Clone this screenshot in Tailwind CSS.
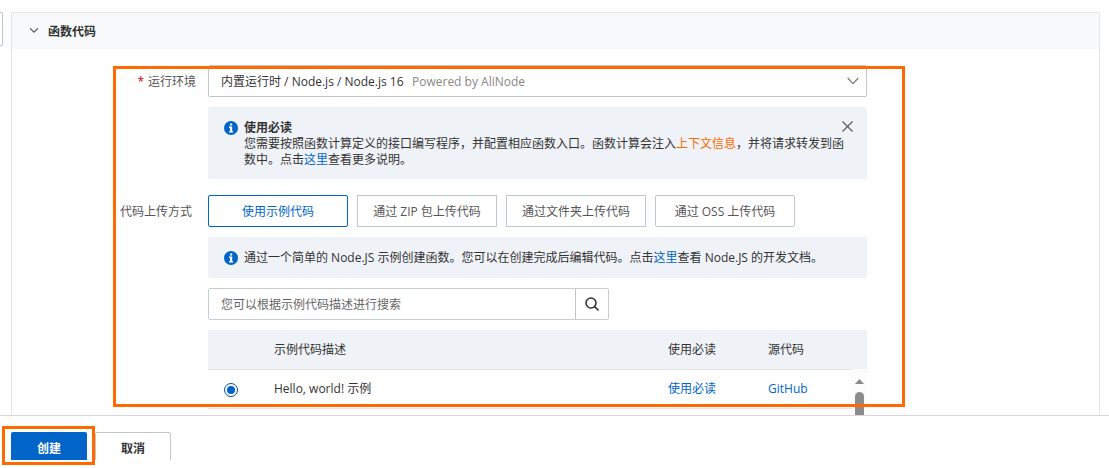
<!DOCTYPE html>
<html lang="zh-CN">
<head>
  <meta charset="UTF-8" />
  <meta name="viewport" content="width=device-width, initial-scale=1.0" />
  <title>创建函数</title>
  <script src="https://cdn.jsdelivr.net/npm/@tailwindcss/browser@4"></script>
</head>
<body class="h-screen flex flex-col overflow-hidden bg-[#fefefe] text-[12px] leading-4 text-[#333] font-['Open_Sans','Noto_Sans_CJK_SC',sans-serif]">
  <!-- Main Section -->
  <div class="flex-1 min-h-0 flex overflow-hidden pt-3">
    <button aria-label="展开菜单" class="w-[3px] h-[34px] shrink-0 bg-white border border-l-0 border-[#c0c6cc] rounded-r-xs shadow-md"></button>

    <section class="flex-1 flex flex-col ml-2 mr-[9px] border border-b-0 border-[#e3e4e6] rounded-t-xs">
      <h2 class="h-9 shrink-0 bg-[#f7f9fa]">
        <button class="flex items-center gap-[10px] h-full pt-0.5 pl-[18px] font-bold">
          <svg class="w-2 h-2 -mt-1" viewBox="0 0 8 8" fill="none" stroke="#555" stroke-width="1.1"><path d="M0 2.2 4 6.2 8 2.2" /></svg>
          函数代码
        </button>
      </h2>

      <form class="relative flex-1 min-h-0 mt-4 ml-[101px] mr-[194px] pr-[38px]">
        <div class="flex gap-3">
          <label for="runtime" class="w-[83px] shrink-0 leading-[34px] text-right text-[#555]"><span class="text-[#c80000] mr-1">*</span>运行环境</label>
          <div class="flex-1 min-w-0">
            <div class="relative">
              <select id="runtime" class="block w-full h-8 pt-0.5 pl-3 pr-8 appearance-none bg-white border border-[#c0c6cc] rounded-xs">
                <option>内置运行时 / Node.js / Node.js 16</option>
              </select>
              <span class="absolute left-[204px] top-0 leading-[34px] text-[#888] pointer-events-none">Powered by AliNode</span>
              <svg class="absolute right-2 top-2.5 w-3 h-3 pointer-events-none" viewBox="0 0 12 12" fill="none" stroke="#777" stroke-width="1.1"><path d="M0.7 3 6 8.6 11.3 3" /></svg>
            </div>

            <div class="relative flex gap-1.5 mt-2.5 pt-[13px] pb-[11px] px-4 bg-[#eff2f7] rounded-xs">
              <svg class="w-3.5 h-3.5 mt-px shrink-0" viewBox="0 0 14 14"><circle cx="7" cy="7" r="7" fill="#0064c8" /><path d="M6 2.4h2.2v2H6zM5 5.6h3.2v4.6h1v1.4H5v-1.4h1V7H5z" fill="#fff" /></svg>
              <div>
                <h3 class="font-bold">使用必读</h3>
                <p>您需要按照函数计算定义的接口编写程序，并配置相应函数入口。函数计算会注入<a href="#" class="text-[#ff6a00]">上下文信息</a>，并将请求转发到函数中。点击<a href="#" class="text-[#0064c8]">这里</a>查看更多说明。</p>
              </div>
              <button type="button" aria-label="关闭" class="absolute right-3.5 top-3.5">
                <svg class="w-[11px] h-[11px]" viewBox="0 0 11 11" fill="none" stroke="#555" stroke-width="1.1"><path d="M0.5 0.5 10.5 10.5M10.5 0.5 0.5 10.5" /></svg>
              </button>
            </div>
          </div>
        </div>

        <div class="flex gap-3 mt-4">
          <span id="uploadLabel" class="w-[83px] shrink-0 pr-1 leading-[34px] text-right text-[#555]">代码上传方式</span>
          <div class="flex-1 min-w-0">
            <div role="group" aria-labelledby="uploadLabel" class="flex gap-[9px] text-[#555]">
              <button type="button" class="w-[140px] h-8 pt-0.5 bg-white border border-[#0064c8] text-[#0064c8] rounded-xs">使用示例代码</button>
              <button type="button" class="w-[140px] h-8 pt-0.5 bg-white border border-[#c0c6cc]">通过 ZIP 包上传代码</button>
              <button type="button" class="w-[140px] h-8 pt-0.5 bg-white border border-[#c0c6cc]">通过文件夹上传代码</button>
              <button type="button" class="w-[140px] h-8 pt-0.5 bg-white border border-[#c0c6cc] rounded-xs">通过 OSS 上传代码</button>
            </div>

            <div class="flex items-center gap-1.5 h-[41px] mt-2.5 px-4 bg-[#eff2f7] rounded-xs">
              <svg class="w-3.5 h-3.5 shrink-0" viewBox="0 0 14 14"><circle cx="7" cy="7" r="7" fill="#0064c8" /><path d="M6 2.4h2.2v2H6zM5 5.6h3.2v4.6h1v1.4H5v-1.4h1V7H5z" fill="#fff" /></svg>
              <p>通过一个简单的 Node.JS 示例创建函数。您可以在创建完成后编辑代码。点击<a href="#" class="text-[#0064c8]">这里</a>查看 Node.JS 的开发文档。</p>
            </div>

            <div class="flex w-[401px] h-8 mt-2.5 bg-white border border-[#c9cdd2] rounded-xs">
              <input type="text" aria-label="搜索示例代码" placeholder="您可以根据示例代码描述进行搜索" class="flex-1 pt-0.5 px-3 placeholder:text-[#666]" />
              <button type="button" aria-label="搜索" class="w-[33px] flex items-center justify-center border-l border-[#c0c6cc]">
                <svg class="w-3.5 h-3.5" viewBox="0 0 14 14" fill="none" stroke="#333" stroke-width="1.6"><circle cx="6" cy="6" r="5" /><path d="M9.6 9.6 13.5 13.3" /></svg>
              </button>
            </div>

            <div class="relative mt-2.5">
              <table class="w-full table-fixed text-left">
                <thead class="bg-[#eff2f7]">
                  <tr class="h-[39px] border-b border-[#e3e4e6]">
                    <th class="w-[66px]"></th>
                    <th class="pt-0.5 font-normal">示例代码描述</th>
                    <th class="w-[100px] pt-0.5 font-normal">使用必读</th>
                    <th class="w-[99px] pt-0.5 font-normal">源代码</th>
                  </tr>
                </thead>
                <tbody>
                  <tr class="h-[39px] border-b border-[#e3e4e6]">
                    <td class="pt-0.5 pl-4"><input type="radio" id="hello" name="sample" checked class="block w-3.5 h-3.5 appearance-none rounded-full border border-[#0b4f96] bg-[#0064c8] bg-clip-content p-0.5" /></td>
                    <td><label for="hello">Hello, world! 示例</label></td>
                    <td><a href="#" class="text-[#0064c8]">使用必读</a></td>
                    <td><a href="#" class="text-[#0064c8]">GitHub</a></td>
                  </tr>
                </tbody>
              </table>
              <!-- list scrollbar -->
              <div class="absolute right-0 top-[39px] w-[15px] h-16 flex flex-col items-center gap-2 pt-2.5 bg-[#fcfcfc]">
                <svg class="w-[9px] h-[5px] shrink-0" viewBox="0 0 9 5" fill="#888"><path d="M4.5 0 9 5H0z" /></svg>
                <div class="w-[9px] flex-1 rounded-t-full bg-[#8b8b8b]"></div>
              </div>
            </div>
          </div>
        </div>

        <div class="absolute inset-x-0 top-px bottom-2 border-3 border-[#ff6a00] pointer-events-none"></div>
      </form>
    </section>
  </div>

  <!-- Footer -->
  <footer class="shrink-0 h-[53px] border-t border-[#d5d6d8] pt-4 pl-[11px]">
    <div class="relative">
      <div class="flex gap-2 h-7 overflow-hidden font-bold">
        <button class="w-[76px] h-8 pt-0.5 shrink-0 bg-[#0064c8] text-white rounded-xs">创建</button>
        <button class="w-[76px] h-8 pt-0.5 shrink-0 bg-white border border-[#c0c6cc] rounded-xs">取消</button>
      </div>
      <div class="absolute -left-[9px] -top-1.5 w-[93px] h-[39px] border-3 border-[#ff6a00] pointer-events-none"></div>
    </div>
  </footer>
</body>
</html>
